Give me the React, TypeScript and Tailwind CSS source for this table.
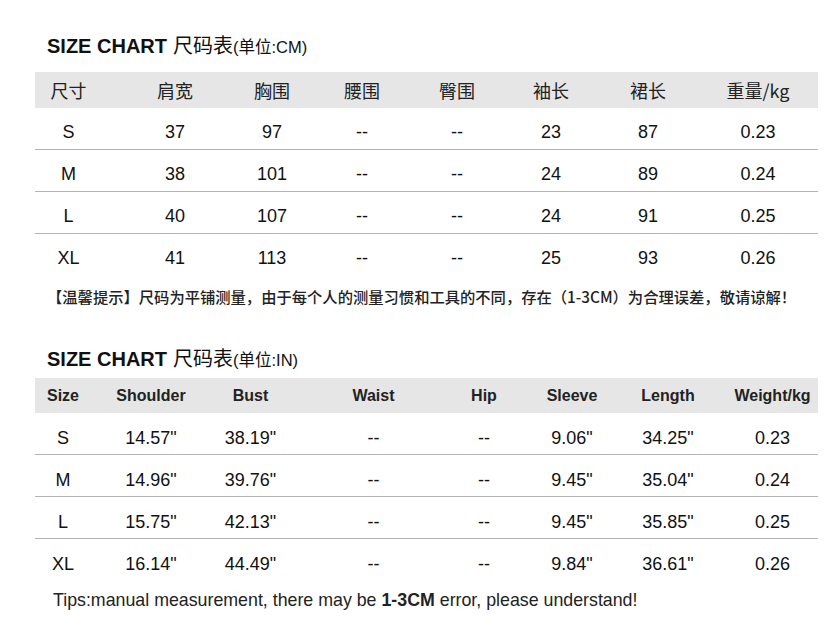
const cmCols = ['w-[87px] pr-[20px]', 'w-[102px] pl-[4px]', 'w-[92px] pl-[4px]', 'w-[92px]', 'w-[98px]', 'w-[96px] pr-[6px]', 'w-[100px] pr-[8px]', 'w-[116px] pr-[4px]'];
const inCols = ['w-[72px] pr-[16px]', 'w-[94px] pr-[6px]', 'w-[111px] pr-[12px]', 'w-[117px] pl-[6px]', 'w-[98px] pl-[12px]', 'w-[92px] pr-[2px]', 'w-[100px] pr-[2px]', 'w-[99px] pl-[8px]'];

const cmHead = ['尺寸', '肩宽', '胸围', '腰围', '臀围', '袖长', '裙长', '重量/kg'];
const cmRows = [
  ['S', '37', '97', '--', '--', '23', '87', '0.23'],
  ['M', '38', '101', '--', '--', '24', '89', '0.24'],
  ['L', '40', '107', '--', '--', '24', '91', '0.25'],
  ['XL', '41', '113', '--', '--', '25', '93', '0.26'],
];

const inHead = ['Size', 'Shoulder', 'Bust', 'Waist', 'Hip', 'Sleeve', 'Length', 'Weight/kg'];
const inRows = [
  ['S', '14.57"', '38.19"', '--', '--', '9.06"', '34.25"', '0.23'],
  ['M', '14.96"', '39.76"', '--', '--', '9.45"', '35.04"', '0.24'],
  ['L', '15.75"', '42.13"', '--', '--', '9.45"', '35.85"', '0.25'],
  ['XL', '16.14"', '44.49"', '--', '--', '9.84"', '36.61"', '0.26'],
];

const sans = "font-['Liberation_Sans','Noto_Sans_CJK_SC',sans-serif]";
const cjk = "font-['Noto_Sans_CJK_SC',sans-serif]";

function Title({ unit }: { unit: string }) {
  return (
    <div className={`h-[24px] leading-[24px] pl-[12px] text-[#111] whitespace-nowrap ${sans}`}>
      <span className="text-[20px] font-bold">SIZE CHART</span>
      <span className={`text-[20px] ml-[6px] ${cjk} font-normal`}>尺码表</span>
      <span className="text-[16.5px]">(<span className={cjk}>单位</span>:{unit})</span>
    </div>
  );
}

function SizeTable({ cols, head, rows, headClass, rowPad }: { cols: string[]; head: string[]; rows: string[][]; headClass: string; rowPad: string }) {
  return (
    <div className="w-[783px]">
      <div className={`flex items-center bg-[#e6e6e6] text-[#222] ${headClass}`}>
        {head.map((h, i) => (
          <div key={i} className={`${cols[i]} text-center`}>{h}</div>
        ))}
      </div>
      {rows.map((r, ri) => (
        <div
          key={ri}
          className={`flex items-center h-[42px] border-b text-[18px] text-[#111] ${rowPad} ${sans} ${ri < rows.length - 1 ? 'border-[#b4b4b4]' : 'border-transparent'}`}
        >
          {r.map((c, ci) => (
            <div key={ci} className={`${cols[ci]} text-center`}>{c}</div>
          ))}
        </div>
      ))}
    </div>
  );
}

export default function App() {
  return (
    <div className="w-[838px] h-[632px] bg-white pl-[35px] pt-[33px] overflow-hidden">
      <Title unit="CM" />
      <div className="mt-[15px]">
        <SizeTable cols={cmCols} head={cmHead} rows={cmRows} rowPad="pt-[8px]" headClass={`h-[36px] text-[18px] font-normal ${cjk}`} />
      </div>
      <div className={`h-[40px] leading-[40px] pl-[12px] text-[15.3px] font-medium text-[#222] whitespace-nowrap ${cjk}`}>
        【温馨提示】尺码为平铺测量，由于每个人的测量习惯和工具的不同，存在（1-3CM）为合理误差，敬请谅解！
      </div>
      <div className="mt-[30px]">
        <Title unit="IN" />
      </div>
      <div className="mt-[8px]">
        <SizeTable cols={inCols} head={inHead} rows={inRows} rowPad="pt-[9px]" headClass={`h-[35px] text-[16px] font-bold ${sans}`} />
      </div>
      <div className={`h-[38px] leading-[38px] pl-[18px] text-[17.8px] text-[#222] whitespace-nowrap ${sans}`}>
        Tips:manual measurement, there may be <span className="font-bold">1-3CM</span> error, please understand!
      </div>
    </div>
  );
}
